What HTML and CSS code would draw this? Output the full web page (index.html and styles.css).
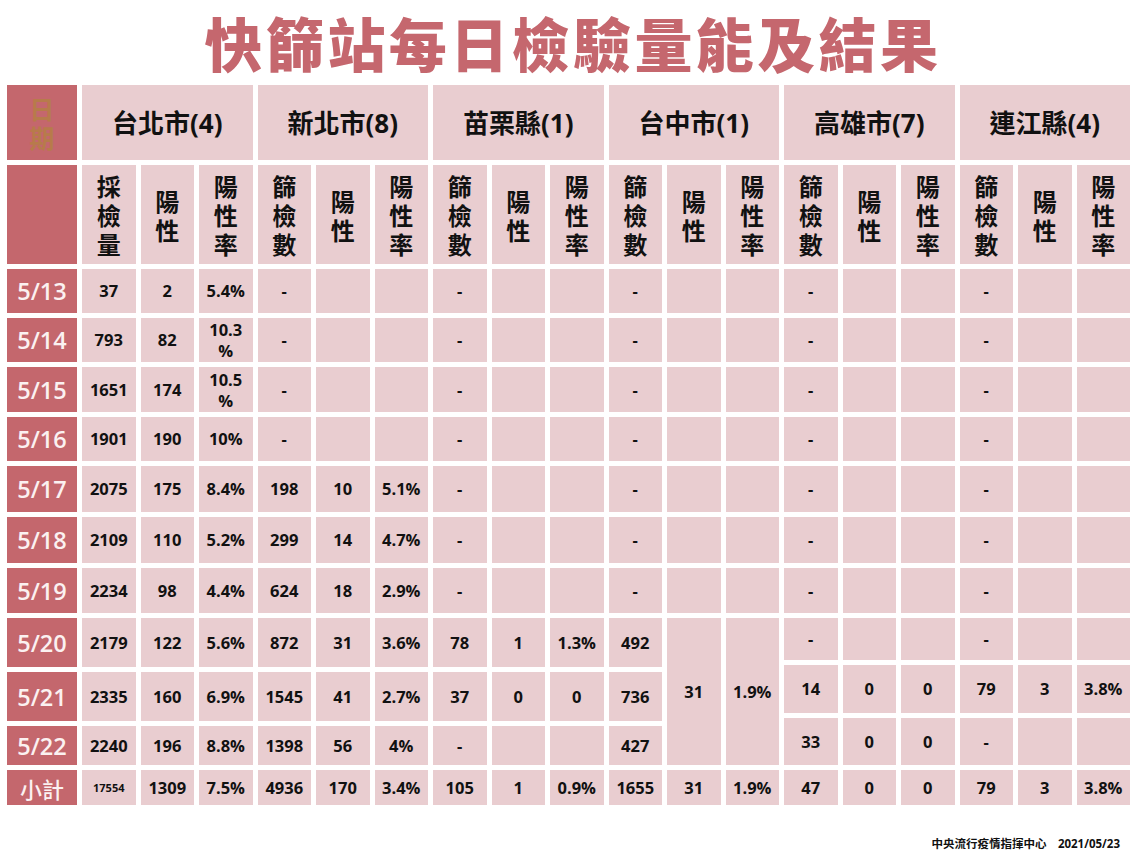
FILE: index.html
```html
<!DOCTYPE html>
<html lang="zh-Hant">
<head>
<meta charset="utf-8">
<title>快篩站每日檢驗量能及結果</title>
<link rel="stylesheet" href="styles.css">
</head>
<body>
<div class="page">
  <h1 class="title">快篩站每日檢驗量能及結果</h1>
  <div class="table">
    <div class="row h1row">
      <div class="d dh">日<br>期</div>
      <div class="c city">台北市(4)</div>
      <div class="c city">新北市(8)</div>
      <div class="c city">苗栗縣(1)</div>
      <div class="c city">台中市(1)</div>
      <div class="c city">高雄市(7)</div>
      <div class="c city">連江縣(4)</div>
    </div>
    <div class="row h2row">
      <div class="d"></div>
      <div class="c sub">採<br>檢<br>量</div><div class="c sub">陽<br>性</div><div class="c sub">陽<br>性<br>率</div>
      <div class="c sub">篩<br>檢<br>數</div><div class="c sub">陽<br>性</div><div class="c sub">陽<br>性<br>率</div>
      <div class="c sub">篩<br>檢<br>數</div><div class="c sub">陽<br>性</div><div class="c sub">陽<br>性<br>率</div>
      <div class="c sub">篩<br>檢<br>數</div><div class="c sub">陽<br>性</div><div class="c sub">陽<br>性<br>率</div>
      <div class="c sub">篩<br>檢<br>數</div><div class="c sub">陽<br>性</div><div class="c sub">陽<br>性<br>率</div>
      <div class="c sub">篩<br>檢<br>數</div><div class="c sub">陽<br>性</div><div class="c sub">陽<br>性<br>率</div>
    </div>
    <div class="row r44">
      <div class="d">5/13</div>
      <div class="c">37</div><div class="c">2</div><div class="c">5.4%</div>
      <div class="c">-</div><div class="c"></div><div class="c"></div>
      <div class="c">-</div><div class="c"></div><div class="c"></div>
      <div class="c">-</div><div class="c"></div><div class="c"></div>
      <div class="c">-</div><div class="c"></div><div class="c"></div>
      <div class="c">-</div><div class="c"></div><div class="c"></div>
    </div>
    <div class="row r44">
      <div class="d">5/14</div>
      <div class="c">793</div><div class="c">82</div><div class="c wrap">10.3<br>%</div>
      <div class="c">-</div><div class="c"></div><div class="c"></div>
      <div class="c">-</div><div class="c"></div><div class="c"></div>
      <div class="c">-</div><div class="c"></div><div class="c"></div>
      <div class="c">-</div><div class="c"></div><div class="c"></div>
      <div class="c">-</div><div class="c"></div><div class="c"></div>
    </div>
    <div class="row r45">
      <div class="d">5/15</div>
      <div class="c">1651</div><div class="c">174</div><div class="c wrap">10.5<br>%</div>
      <div class="c">-</div><div class="c"></div><div class="c"></div>
      <div class="c">-</div><div class="c"></div><div class="c"></div>
      <div class="c">-</div><div class="c"></div><div class="c"></div>
      <div class="c">-</div><div class="c"></div><div class="c"></div>
      <div class="c">-</div><div class="c"></div><div class="c"></div>
    </div>
    <div class="row r44">
      <div class="d">5/16</div>
      <div class="c">1901</div><div class="c">190</div><div class="c">10%</div>
      <div class="c">-</div><div class="c"></div><div class="c"></div>
      <div class="c">-</div><div class="c"></div><div class="c"></div>
      <div class="c">-</div><div class="c"></div><div class="c"></div>
      <div class="c">-</div><div class="c"></div><div class="c"></div>
      <div class="c">-</div><div class="c"></div><div class="c"></div>
    </div>
    <div class="row r46">
      <div class="d">5/17</div>
      <div class="c">2075</div><div class="c">175</div><div class="c">8.4%</div>
      <div class="c">198</div><div class="c">10</div><div class="c">5.1%</div>
      <div class="c">-</div><div class="c"></div><div class="c"></div>
      <div class="c">-</div><div class="c"></div><div class="c"></div>
      <div class="c">-</div><div class="c"></div><div class="c"></div>
      <div class="c">-</div><div class="c"></div><div class="c"></div>
    </div>
    <div class="row r46">
      <div class="d">5/18</div>
      <div class="c">2109</div><div class="c">110</div><div class="c">5.2%</div>
      <div class="c">299</div><div class="c">14</div><div class="c">4.7%</div>
      <div class="c">-</div><div class="c"></div><div class="c"></div>
      <div class="c">-</div><div class="c"></div><div class="c"></div>
      <div class="c">-</div><div class="c"></div><div class="c"></div>
      <div class="c">-</div><div class="c"></div><div class="c"></div>
    </div>
    <div class="row r45">
      <div class="d">5/19</div>
      <div class="c">2234</div><div class="c">98</div><div class="c">4.4%</div>
      <div class="c">624</div><div class="c">18</div><div class="c">2.9%</div>
      <div class="c">-</div><div class="c"></div><div class="c"></div>
      <div class="c">-</div><div class="c"></div><div class="c"></div>
      <div class="c">-</div><div class="c"></div><div class="c"></div>
      <div class="c">-</div><div class="c"></div><div class="c"></div>
    </div>
    <div class="block">
      <div class="bleft">
        <div class="d">5/20</div>
        <div class="c">2179</div><div class="c">122</div><div class="c">5.6%</div>
        <div class="c">872</div><div class="c">31</div><div class="c">3.6%</div>
        <div class="c">78</div><div class="c">1</div><div class="c">1.3%</div>
        <div class="c">492</div>
        <div class="d">5/21</div>
        <div class="c">2335</div><div class="c">160</div><div class="c">6.9%</div>
        <div class="c">1545</div><div class="c">41</div><div class="c">2.7%</div>
        <div class="c">37</div><div class="c">0</div><div class="c">0</div>
        <div class="c">736</div>
        <div class="d">5/22</div>
        <div class="c">2240</div><div class="c">196</div><div class="c">8.8%</div>
        <div class="c">1398</div><div class="c">56</div><div class="c">4%</div>
        <div class="c">-</div><div class="c"></div><div class="c"></div>
        <div class="c">427</div>
      </div>
      <div class="bmid">
        <div class="c">31</div><div class="c">1.9%</div>
      </div>
      <div class="bright">
        <div class="c">-</div><div class="c"></div><div class="c"></div>
        <div class="c">-</div><div class="c"></div><div class="c"></div>
        <div class="c">14</div><div class="c">0</div><div class="c">0</div>
        <div class="c">79</div><div class="c">3</div><div class="c">3.8%</div>
        <div class="c">33</div><div class="c">0</div><div class="c">0</div>
        <div class="c">-</div><div class="c"></div><div class="c"></div>
      </div>
    </div>
    <div class="row rsum">
      <div class="d">小計</div>
      <div class="c sm">17554</div><div class="c">1309</div><div class="c">7.5%</div>
      <div class="c">4936</div><div class="c">170</div><div class="c">3.4%</div>
      <div class="c">105</div><div class="c">1</div><div class="c">0.9%</div>
      <div class="c">1655</div><div class="c">31</div><div class="c">1.9%</div>
      <div class="c">47</div><div class="c">0</div><div class="c">0</div>
      <div class="c">79</div><div class="c">3</div><div class="c">3.8%</div>
    </div>
  </div>
  <div class="footer">中央流行疫情指揮中心　2021/05/23</div>
</div>
</body>
</html>
```
FILE: styles.css
```css
html, body {
  margin: 0;
  padding: 0;
  background: #ffffff;
}

body {
  width: 1143px;
  height: 855px;
  overflow: hidden;
  font-family: "Open Sans", "Noto Sans CJK TC", sans-serif;
  color: #111111;
}

.page {
  padding: 0 7px;
}

.title {
  margin: 0 0 1px 0;
  height: 84px;
  line-height: 84px;
  padding-left: 3px;
  text-align: center;
  font-family: "Noto Sans CJK TC", sans-serif;
  font-weight: 900;
  font-size: 58px;
  letter-spacing: 3.4px;
  color: #c5676e;
  white-space: nowrap;
}

.table {
  display: flex;
  flex-direction: column;
  gap: 5px;
}

.row {
  display: grid;
  grid-template-columns: 70px repeat(18, 53.5px);
  column-gap: 5px;
}

.c, .d {
  display: flex;
  align-items: center;
  justify-content: center;
  text-align: center;
  font-weight: 700;
}

.c {
  background: #e9cdd0;
  font-size: 16.5px;
  line-height: 20px;
}

.d {
  background: #c4676d;
  color: #fbf1f1;
  font-weight: 600;
  font-size: 23.5px;
}

.h1row { height: 75px; }
.h2row { height: 99px; }
.r44 { height: 44px; }
.r45 { height: 45px; }
.r46 { height: 46px; }
.rsum { height: 35px; }

.dh {
  font-family: "Noto Sans CJK TC", sans-serif;
  font-weight: 700;
  font-size: 25px;
  line-height: 29px;
  color: #b77b4b;
}

.city {
  grid-column: span 3;
  font-family: "Open Sans", "Noto Sans CJK TC", sans-serif;
  font-size: 26px;
  font-weight: 700;
}

.sub {
  font-family: "Noto Sans CJK TC", sans-serif;
  font-size: 24px;
  line-height: 29px;
  font-weight: 700;
}

.wrap {
  line-height: 21px;
}

.sm {
  font-size: 11px;
}

.rsum .d {
  font-family: "Noto Sans CJK TC", sans-serif;
  font-weight: 500;
  font-size: 22px;
}

.block {
  display: flex;
  gap: 5px;
  height: 147px;
}

.bleft {
  display: grid;
  grid-template-columns: 70px repeat(10, 53.5px);
  grid-template-rows: 49px 49px 39px;
  gap: 5px;
}

.bmid {
  display: grid;
  grid-template-columns: repeat(2, 53.5px);
  gap: 5px;
}

.bright {
  display: grid;
  grid-template-columns: repeat(6, 53.5px);
  grid-template-rows: 42px 48px 47px;
  gap: 5px;
}

.footer {
  margin-top: 30px;
  padding-right: 16px;
  text-align: right;
  font-family: "Open Sans", "Noto Sans CJK TC", sans-serif;
  font-size: 11.5px;
  font-weight: 700;
  color: #111111;
}
```
